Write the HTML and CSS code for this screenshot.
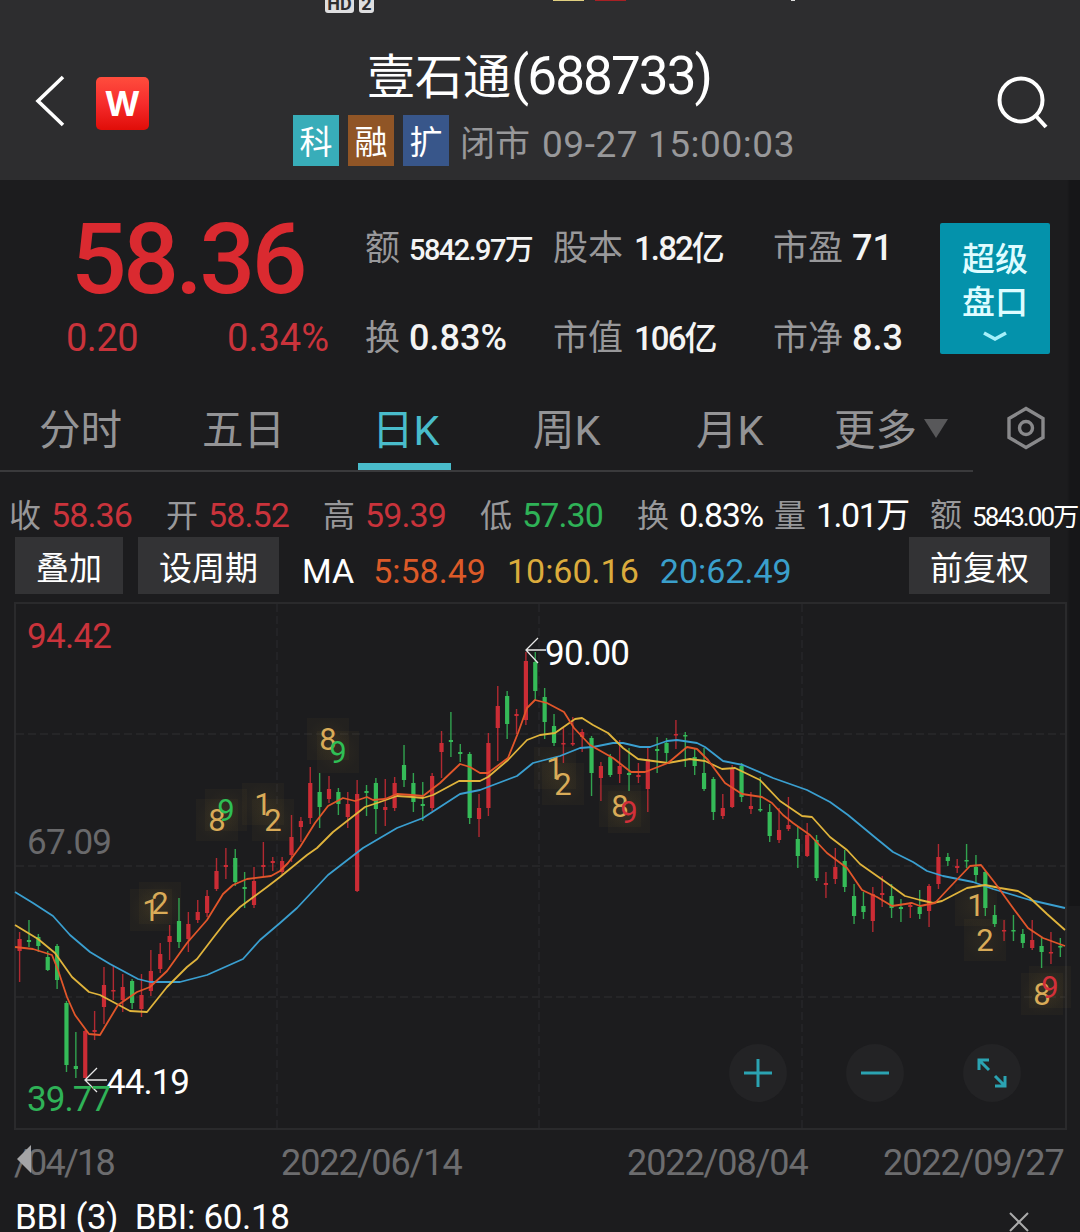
FILE: index.html
```
<!DOCTYPE html>
<html lang="zh-CN">

  <head>
    <meta charset="utf-8">
    <title>壹石通(688733)</title>
    <link rel="stylesheet" href="styles.css">
  </head>

  <body>
    <header>
      <div class="statusbar">
        <span class="sim hd">HD</span>
        <span class="sim slot">2</span>
        <span class="pill yellow"></span>
        <span class="pill red"></span>
        <span class="pill dot"></span>
      </div>

      <div class="titlebar">
        <svg class="back" width="30" height="54" viewBox="0 0 30 54"><path d="M28 3 L3 27 L28 51"/></svg>
        <div class="logo">W</div>
        <div class="heading">
          <h1>壹石通<span>(688733)</span></h1>
          <div class="sub">
            <span class="chip ke">科</span>
            <span class="chip rong">融</span>
            <span class="chip kuo">扩</span>
            <span class="state">闭市</span>
            <span class="time">09-27 15:00:03</span>
          </div>
        </div>
        <svg class="search" width="54" height="54" viewBox="0 0 54 54"><circle cx="25" cy="24" r="21.5"/><path d="M40 40 L50 51"/></svg>
      </div>
    </header>

    <div id="content">

      <section class="quote">
        <div class="price">
          <div class="last">58.36</div>
          <div class="change"><span>0.20</span><span>0.34%</span></div>
        </div>
        <div class="facts">
          <div><label>额</label><b class="s">5842.97万</b></div>
          <div><label>股本</label><b class="m">1.82亿</b></div>
          <div><label>市盈</label><b>71</b></div>
          <div><label>换</label><b>0.83%</b></div>
          <div><label>市值</label><b class="m">106亿</b></div>
          <div><label>市净</label><b>8.3</b></div>
        </div>
        <div class="super">
          超级<br>盘口
          <svg width="26" height="12" viewBox="0 0 26 12"><path d="M2 3 L13 9 L24 3"/></svg>
        </div>
      </section>

      <nav class="tabs">
        <span class="t1">分时</span>
        <span class="t2">五日</span>
        <span class="t3 active">日K</span>
        <span class="t4">周K</span>
        <span class="t5">月K</span>
        <span class="t6">更多<i></i></span>
        <svg class="gear" width="42" height="44" viewBox="0 0 42 44"><path d="M20 2.5 L37 12.5 V31.5 L20 41.5 L3 31.5 V12.5 Z"/><circle cx="20" cy="22" r="6.5"/></svg>
      </nav>

      <section class="ohlc">
        <div class="c1"><label>收</label><span class="up">58.36</span></div>
        <div class="c1"><label>开</label><span class="up">58.52</span></div>
        <div class="c1"><label>高</label><span class="up">59.39</span></div>
        <div class="c1"><label>低</label><span class="down">57.30</span></div>
        <div class="c2"><label>换</label><span class="pct">0.83%</span></div>
        <div class="c3"><label>量</label><span class="pct">1.01万</span></div>
        <div class="c4"><label>额</label><span class="small">5843.00万</span></div>
      </section>

      <section class="tools">
        <span class="btn b2">叠加</span>
        <span class="btn b3">设周期</span>
        <span class="ma">MA</span>
        <span class="ma ma5">5:58.49</span>
        <span class="ma ma10">10:60.16</span>
        <span class="ma ma20">20:62.49</span>
        <span class="btn b3 right">前复权</span>
      </section>

      <section class="chart">
        <svg id="kline" width="1080" height="536" viewBox="0 597 1080 536"></svg>
        <div class="zoom">
          <span><svg width="32" height="32" viewBox="0 0 32 32"><path d="M2 16 H30 M16 2 V30"/></svg></span>
          <span><svg width="32" height="32" viewBox="0 0 32 32"><path d="M2 16 H30"/></svg></span>
          <span><svg width="32" height="32" viewBox="0 0 32 32"><path d="M13 13 L4 4 M3 13 V3 H13 M19 19 L28 28 M19 29 H29 V19"/></svg></span>
        </div>
      </section>

      <div class="dates">
        <span class="first">/04/18<i></i></span>
        <span>2022/06/14</span>
        <span>2022/08/04</span>
        <span>2022/09/27</span>
      </div>

      <div class="bbi">
        <span>BBI (3)&nbsp; BBI: 60.18</span>
        <svg width="22" height="22" viewBox="0 0 22 22"><path d="M2 2 L20 20 M20 2 L2 20"/></svg>
      </div>

    </div>

    <script src="chart.js"></script>
  </body>

</html>
```

FILE: styles.css
```
:root {
  --bg: #1c1c1e;
  --header: #2d2d2f;
  --label: #98989a;
  --up: #c9333b;
  --down: #2fb257;
  --teal: #49bccb;
}

* {
  box-sizing: border-box;
}

body {
  margin: 0;
  width: 1080px;
  height: 1232px;
  overflow: hidden;
  background: var(--bg);
  color: #fff;
  font-family: Roboto, "Noto Sans CJK SC", sans-serif;
  white-space: nowrap;
}

svg {
  display: block;
  fill: none;
}

header {
  height: 180px;
  background: var(--header);
}

.statusbar {
  height: 14px;
  display: flex;
  align-items: flex-start;
  padding-left: 325px;
}

.sim {
  height: 13px;
  border-radius: 0 0 3px 3px;
  background: #dedee0;
  color: #2d2d2f;
  font-size: 18px;
  font-weight: 700;
  line-height: 7px;
  text-align: center;
  overflow: hidden;
}

.hd { width: 29px; margin-right: 5px; }
.slot { width: 15px; margin-right: 179px; }

.pill { width: 31px; height: 1px; margin-right: 11px; }
.yellow { background: #e0cf80; }
.red { background: #a82024; margin-right: 165px; }
.dot { width: 4px; background: #ddd; }

.titlebar {
  display: flex;
  height: 166px;
}

.back {
  margin: 60px 0 0 35px;
  stroke: #fff;
  stroke-width: 3.6;
}

.logo {
  width: 53px;
  height: 53px;
  margin: 63px 0 0 31px;
  border-radius: 5px;
  background: linear-gradient(#ff4d3d, #f62c2c 50%, #e00d08);
  font-family: Inter, Roboto, sans-serif;
  font-size: 34px;
  font-weight: 700;
  line-height: 53px;
  text-align: center;
}

.heading {
  width: 600px;
  margin-left: 144px;
}

h1 {
  margin: 0 0 0 74px;
  padding-top: 32px;
  font-size: 48px;
  font-weight: 400;
  line-height: 60px;
  height: 101px;
}

h1 span {
  font-size: 53px;
  letter-spacing: -1.9px;
}

.sub {
  display: flex;
  height: 52px;
  line-height: 59px;
  font-size: 35px;
  color: var(--label);
}

.chip {
  width: 46px;
  height: 51px;
  line-height: 55px;
  margin-right: 9px;
  font-size: 33px;
  color: #fff;
  text-align: center;
}

.ke { background: #38adb9; }
.rong { background: #905526; }
.kuo { background: #38568a; }

.state { margin: 0 12px 0 2px; }
.time { font-size: 37px; letter-spacing: 0.55px; }

.search {
  margin: 62px 0 0 103px;
  stroke: #fff;
  stroke-width: 4;
}

#content {
  height: 1052px;
  background: linear-gradient(90deg, transparent 1067px, #161618 1070px) no-repeat 0 0 / 1080px 726px;
}

.quote {
  display: flex;
  height: 212px;
}

.price {
  width: 365px;
}

.last {
  height: 130px;
  padding: 30px 0 0 71px;
  font-size: 98px;
  font-weight: 500;
  line-height: 100px;
  letter-spacing: -3.4px;
  color: #da2a30;
}

.change {
  display: flex;
  justify-content: space-between;
  padding: 4px 36px 0 66px;
  font-size: 38px;
  line-height: 48px;
  color: var(--up);
}

.change span:first-child {
  letter-spacing: -0.5px;
}

.facts {
  display: grid;
  grid-template-columns: 188px 220px 167px;
  grid-template-rows: 90px 90px;
  padding-top: 23px;
}

.facts div {
  display: flex;
  align-items: baseline;
  height: 90px;
  line-height: 91px;
}

.facts label {
  margin-right: 9px;
  font-size: 35px;
  color: var(--label);
}

.facts b {
  font-size: 36px;
  font-weight: 500;
  color: #f4f4f4;
}

.facts .s { font-size: 29px; letter-spacing: -1.6px; }
.facts .m { margin-left: 2px; font-size: 33px; letter-spacing: -1.9px; }

.super {
  width: 110px;
  height: 131px;
  margin-top: 43px;
  padding-top: 15px;
  border-radius: 2px;
  background: #0492ab;
  color: #dffcff;
  font-size: 33px;
  font-weight: 500;
  line-height: 43px;
  text-align: center;
}

.super svg {
  margin: 6px auto 0;
  stroke: #a5f0fa;
  stroke-width: 3.6;
}

.tabs {
  display: grid;
  grid-template-columns: 202px 156px 175px 163px 139px 171px 74px;
  height: 80px;
  background: linear-gradient(#3a3a3c, #3a3a3c) no-repeat 0 78px / 973px 2px;
  color: #949496;
  font-size: 41.5px;
  line-height: 77px;
}

.tabs .t1 { padding-left: 39px; }
.tabs .t3 { width: 93px; height: 78px; padding-left: 14px; }
.tabs .active { color: var(--teal); border-bottom: 7px solid var(--teal); }

.t6 { margin-left: -1px; }

.t6 i {
  display: inline-block;
  margin-left: 7px;
  border: 12px solid transparent;
  border-top: 19px solid #58585a;
  border-bottom: 0;
  vertical-align: 7px;
}

.gear {
  margin-top: 14px;
  stroke: #89898b;
  stroke-width: 3.4;
}

.ohlc {
  display: flex;
  height: 65px;
  padding: 18px 0 0 9px;
  line-height: 51px;
}

.ohlc div {
  display: flex;
  flex-shrink: 0;
  align-items: baseline;
}

.ohlc label {
  margin-right: 10px;
  font-size: 32px;
  color: var(--label);
}

.ohlc span { font-size: 34px; letter-spacing: -0.9px; }
.ohlc .pct { letter-spacing: -1.5px; }
.ohlc .small { font-size: 26px; letter-spacing: -1.9px; }
.c1 { width: 157px; }
.c2 { width: 137px; }
.c3 { width: 156px; }
.up { color: var(--up); }
.down { color: var(--down); }

.tools {
  display: flex;
  height: 60px;
  padding-left: 15px;
}

.btn {
  height: 57px;
  line-height: 63px;
  margin-right: 15px;
  background: #333335;
  font-size: 33px;
  text-align: center;
}

.b2 { width: 108px; }
.b3 { width: 141px; }
.right { margin-left: auto; margin-right: 30px; }

.ma {
  margin-left: 21px;
  font-size: 34px;
  line-height: 69px;
}

.b3 + .ma { margin-left: 8px; }
.ma5 { margin-left: 19px; color: #dc5a28; }
.ma10 { color: #dbab3c; }
.ma20 { color: #3a9fcb; }

.chart {
  position: relative;
  height: 536px;
}

#kline text {
  font-size: 35px;
}

#kline .mark {
  font-size: 31px;
}

.zoom {
  position: absolute;
  right: 59px;
  bottom: 31px;
  display: flex;
  gap: 59px;
}

.zoom span {
  display: flex;
  align-items: center;
  justify-content: center;
  width: 58px;
  height: 58px;
  border-radius: 50%;
  background: #232325;
}

.zoom svg {
  stroke: #2ba3b2;
  stroke-width: 3;
}

.dates {
  display: flex;
  height: 60px;
  padding-left: 15px;
  font-size: 36px;
  line-height: 60px;
  color: #6c6c6e;
  letter-spacing: -1.1px;
}

.dates span:nth-child(1) { width: 266px; }
.dates span:nth-child(2) { width: 346px; }
.dates span:nth-child(3) { width: 256px; }

.first {
  position: relative;
  text-indent: -1px;
  letter-spacing: -1.8px;
}

.first i {
  position: absolute;
  left: 2px;
  top: 12px;
  border: 14px solid transparent;
  border-right: 14px solid #a4a4a6;
  border-left: 0;
}

.bbi {
  display: flex;
  justify-content: space-between;
  padding: 0 50px 0 15px;
  font-size: 35px;
  line-height: 49px;
  letter-spacing: -0.35px;
}

.bbi svg {
  margin-top: 18px;
  stroke: #aaa;
  stroke-width: 2;
}
```

FILE: chart.js
```
// one row per day: up/down, high, body top, body bottom, low
const days = `r 932 939 951 982|g 920 940 942 947|g 934 937 946 952|g 951 957 970 971|g 944 946 980 989
g 1001 1003 1065 1072|g 1032 1066 1069 1078|r 1030 1031 1078 1078|r 1011 1030 1032 1040|r 967 985 1007 1024
r 965 990 991 1000|r 974 987 1000 1012|g 979 981 1003 1009|r 974 995 1009 1017|r 950 971 991 996
r 943 954 969 973|r 925 936 942 960|g 898 921 942 948|r 912 924 939 952|r 900 912 920 923
r 890 896 913 917|r 858 871 889 891|r 848 865 867 879|g 849 858 882 886|g 872 887 889 908
r 867 881 905 908|r 842 865 867 876|r 857 861 863 871|r 857 861 872 875|r 815 837 855 862
r 817 821 827 842|r 767 783 818 824|g 773 792 807 828|r 776 789 799 803|g 788 792 804 815
r 792 804 817 828|r 780 794 891 892|g 785 791 793 816|g 778 783 809 834|r 779 807 810 826
r 777 783 808 811|g 745 765 780 787|g 773 783 802 812|g 782 804 806 821|r 773 776 808 811
r 731 743 752 778|g 712 740 742 757|g 744 752 754 762|g 752 754 818 824|r 794 808 819 837
r 733 743 808 816|r 686 706 728 761|g 691 696 724 739|r 709 714 716 734|r 652 661 720 725
g 652 662 691 700|g 688 697 722 739|g 714 726 743 746|r 727 743 744 763|r 717 743 744 746
r 729 732 737 752|g 736 738 773 796|r 762 766 778 801|g 754 757 775 777|r 740 766 774 783
g 748 773 775 791|r 763 775 777 783|r 747 759 789 812|g 737 749 751 773|g 738 743 753 763
r 720 734 735 749|g 732 735 736 767|g 748 757 766 775|g 748 773 789 791|g 777 779 812 820
r 794 808 816 819|r 765 768 807 808|g 763 766 797 802|r 792 806 809 814|g 777 809 810 812
g 804 812 836 842|r 808 830 840 843|r 797 825 829 831|g 826 839 856 868|r 823 835 856 857
g 835 840 878 881|r 872 883 885 898|r 848 867 879 884|g 850 861 887 892|g 884 896 916 924
g 892 906 912 919|r 887 894 921 932|r 876 893 895 907|g 884 896 908 918|g 899 907 909 922
r 902 905 907 918|g 890 907 914 919|r 884 886 911 927|r 844 857 884 889|g 853 857 861 866
r 859 866 868 873|g 844 860 861 868|g 855 867 875 883|g 870 872 908 916|g 905 915 924 927
r 920 930 931 941|g 915 930 931 941|g 929 934 943 948|r 920 940 948 950|g 937 946 952 968
r 932 952 953 964|g 938 946 947 957`.split(/[|\n]/);

const lines = {
  '#3a9fd0': '15,892 33,903 53,916 70,935 90,952 110,964 138,979 150,982 180,982 207,975 243,959 260,940 280,923 297,908 328,875 363,848 397,828 423,818 460,794 480,790 517,776 533,763 560,756 580,748 593,747 613,743 623,743 640,747 650,747 667,741 677,740 697,743 705,747 723,761 743,765 773,778 807,790 830,802 848,815 877,839 893,852 913,862 927,871 943,876 973,882 993,889 1030,900 1065,908',
  '#e0b43c': '15,925 38,939 55,953 72,977 89,992 100,995 115,1003 130,1011 147,1012 167,987 187,967 197,959 213,938 227,920 240,907 267,887 280,877 307,855 317,848 333,832 365,807 380,802 397,796 413,797 423,798 433,795 459,781 480,781 488,777 508,760 527,740 540,735 555,733 575,719 582,718 593,725 608,733 623,748 638,759 668,763 690,759 705,761 722,769 735,768 760,780 780,801 802,816 812,817 830,837 847,850 860,864 887,883 905,896 920,900 933,903 942,901 967,888 985,885 1000,888 1018,891 1030,898 1047,914 1065,930',
  '#e2562a': '15,947 33,949 52,955 58,970 67,997 75,1015 89,1034 100,1035 118,1005 137,992 150,987 167,971 187,943 207,920 223,894 233,885 247,879 271,876 280,871 288,863 300,847 315,823 328,806 343,798 355,801 367,797 373,800 385,799 397,794 412,795 423,796 440,783 460,764 470,767 480,773 488,773 508,758 518,733 527,708 535,700 547,703 564,712 574,728 590,745 613,758 631,772 645,772 668,763 687,747 697,749 708,760 725,783 742,794 762,797 772,803 783,815 793,823 810,835 827,853 847,868 862,890 877,897 892,906 912,903 920,906 935,903 950,887 970,866 981,865 995,883 1013,908 1028,928 1043,938 1065,946'
};

// digit, centre x, baseline, colour
const tan = '#d9ab58', green = '#2fbf55', red = '#d2303a';
const marks = [
  [1, 151, 921, tan], [2, 160, 914, tan],
  [8, 217, 831, tan], [9, 226, 821, green],
  [1, 263, 815, tan], [2, 273, 831, tan],
  [8, 328, 750, tan], [9, 338, 763, green],
  [1, 555, 779, tan], [2, 563, 795, tan],
  [8, 620, 817, tan], [9, 629, 823, red],
  [1, 976, 916, tan], [2, 985, 951, tan],
  [8, 1042, 1005, tan], [9, 1050, 998, red]
];

let out = '<defs><radialGradient id="glow"><stop offset="0" stop-color="#a08030" stop-opacity="0.12"/><stop offset="1" stop-color="#a08030" stop-opacity="0.05"/></radialGradient></defs>';
out += '<path d="M15 603 H1066 V1129 H15 Z" stroke="#2a2a2c" stroke-width="2"/>';
out += '<path d="M16 734 H1065 M16 866 H1065 M16 997 H1065 M277 604 V1128 M539 604 V1128 M802 604 V1128" stroke="#29292b" stroke-width="1.3" stroke-dasharray="8 4"/>';

for (const m of marks)
  out += `<rect x="${m[1] - 21}" y="${m[2] - 32}" width="42" height="42" fill="url(#glow)"/>`;

out += '<text x="27" y="648" textLength="85" fill="#c9333b">94.42</text>';
out += '<text x="27" y="854" textLength="85" fill="#69696b">67.09</text>';

days.forEach((row, i) => {
  const [dir, high, top, bottom, low] = row.trim().split(' ');
  const x = 19.6 + i * 9.376;
  const color = dir == 'r' ? '#cb2c35' : '#35bb58';
  out += `<path d="M${x} ${high} V${low}" stroke="${color}" stroke-width="1.4" opacity="0.85"/>`;
  out += `<rect x="${x - 2.1}" y="${top}" width="4.2" height="${Math.max(bottom - top, 1.5)}" fill="${color}"/>`;
});

for (const color in lines)
  out += `<polyline points="${lines[color]}" stroke="${color}" stroke-width="1.8" stroke-linejoin="round"/>`;

for (const m of marks)
  out += `<text class="mark" x="${m[1]}" y="${m[2]}" text-anchor="middle" fill="${m[3]}">${m[0]}</text>`;

out += '<path d="M97 1068 L85 1080 L97 1092 M85 1080 H107 M538 638 L526 650 L538 663 M526 650 H546" stroke="#e8e8e8" stroke-width="1.3"/>';
out += '<text x="106" y="1094" textLength="84" fill="#fff">44.19</text>';
out += '<text x="545" y="665" textLength="85" fill="#fff">90.00</text>';
out += '<text x="27" y="1111" textLength="84" fill="#2fb257">39.77</text>';

document.getElementById('kline').innerHTML = out;
```
